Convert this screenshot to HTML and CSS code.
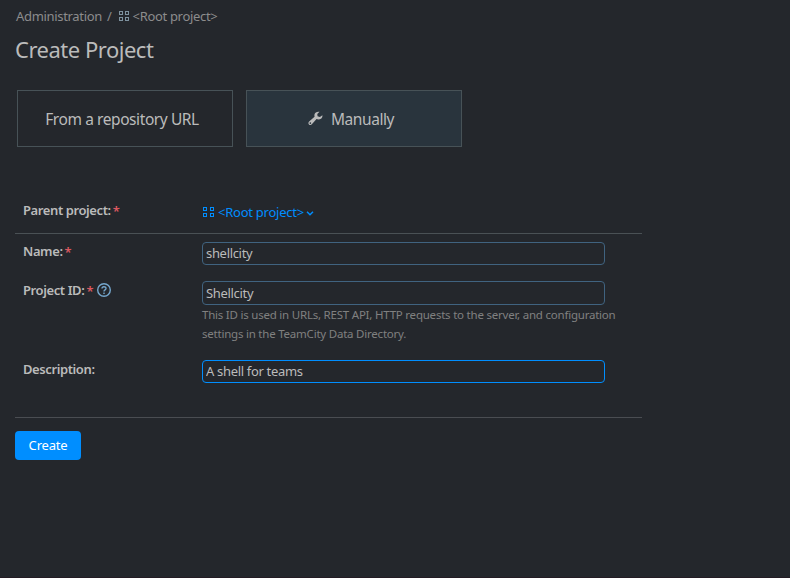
FILE: index.html
```html
<!DOCTYPE html>
<html lang="en">
<head>
<meta charset="utf-8">
<title>Create Project</title>
<link rel="stylesheet" href="styles.css">
</head>
<body>
<main class="page">
  <nav class="breadcrumbs">
    <span class="crumb">Administration</span><span class="slash">/</span>
    <svg class="grid-icon" viewBox="0 0 11 11"><path d="M.5.5h3v3h-3zM6.5.5h3v3h-3zM.5 6.500h3v3h-3zM6.5 6.500h3v3h-3z"/></svg>
    <span class="root">&lt;Root project&gt;</span>
  </nav>
  <h1 class="title">Create Project</h1>
  <div class="modes">
    <button class="mode">From a repository URL</button>
    <button class="mode selected">
      <svg class="wrench" viewBox="0 0 16 16"><path d="M15.3 4.5 12.7 6.3 10.2 5.5 9.9 3.1 12.3.9C10 .2 7.500 1.400 6.900 3.600 6.700 4.500 6.800 5.300 7 6.100L1.200 11.200C.3 12 .2 13.400 1 14.300 1.900 15.200 3.300 15.100 4.100 14.200L9.100 8.600C10.600 9.400 12.800 9.200 14.200 7.900 15.200 6.900 15.600 5.600 15.300 4.500ZM2.500 13.800a.9.9 0 1 1 0-1.800.9.9 0 0 1 0 1.800Z"/></svg>
      <span>Manually</span>
    </button>
  </div>
  <form class="form">
    <div class="row parent">
      <div class="label">Parent project: <span class="star">*</span></div>
      <a class="picker">
        <svg class="grid-icon" viewBox="0 0 11 11"><path d="M.5.5h3v3h-3zM7.500.5h3v3h-3zM.5 6.500h3v3h-3zM7.500 6.500h3v3h-3z"/></svg>
        <span class="picker-text">&lt;Root project&gt;</span>
        <svg class="chevron" viewBox="0 0 8 5"><path d="m1 .8 3 3 3-3"/></svg>
      </a>
    </div>
    <div class="row name">
      <label class="label" for="name">Name: <span class="star">*</span></label>
      <input class="field" id="name" value="shellcity">
    </div>
    <div class="row project-id">
      <label class="label" for="pid">Project ID: <span class="star">*</span><svg class="help" viewBox="0 0 14 14"><circle cx="7" cy="7" r="6.300"/><path d="M5 5.600C5 3.100 9 3.100 9 5.400 9 6.900 7 6.800 7 8.400M7 9.500v1.400"/></svg></label>
      <div class="control">
        <input class="field tall" id="pid" value="Shellcity">
        <p class="note">This ID is used in URLs, REST API, HTTP requests to the server, and configuration<br>settings in the TeamCity Data Directory.</p>
      </div>
    </div>
    <div class="row description">
      <label class="label" for="desc">Description:</label>
      <input class="field focused" id="desc" value="A shell for teams">
    </div>
    <button class="create" type="button">Create</button>
  </form>
</main>
</body>
</html>
```
FILE: styles.css
```css
* { box-sizing: border-box; }
body {
  margin: 0;
  background: #24272c;
  color: #bbb;
  font: 13px/18px "Noto Sans", sans-serif;
  letter-spacing: -.32px;
}
.page {
  height: 578px;
  padding: 7px 15px 0;
  border-bottom: 1px solid #241c24;
  overflow: hidden;
}
.breadcrumbs {
  display: flex;
  align-items: center;
  height: 18px;
  padding-left: 1px;
  color: #8c8c8c;
}
.slash { margin: 0 7px 0 5px; }
.grid-icon {
  flex: none;
  width: 11px;
  height: 11px;
  fill: none;
  stroke: #7e929f;
  shape-rendering: crispEdges;
}
.root { margin-left: 3px; }
.title {
  margin: 9px 0 0;
  font-size: 22px;
  line-height: 30px;
  font-weight: 400;
  letter-spacing: -.49px;
}
.modes {
  display: flex;
  gap: 13px;
  margin: 26px 0 0 2px;
}
.mode {
  display: flex;
  align-items: center;
  justify-content: center;
  gap: 8px;
  width: 216px;
  height: 57px;
  padding: 0 6px 0 0;
  border: 1px solid #475257;
  background: none;
  color: #bbb;
  font: 15.500px/20px "Noto Sans", sans-serif;
  letter-spacing: -.42px;
}
.mode.selected { background: #29343d; }
.wrench { width: 15px; height: 15px; fill: #bbb; }
.form { width: 627px; margin-top: 47px; }
.row {
  display: grid;
  grid-template-columns: 179px 403px;
  align-items: start;
  padding-left: 8px;
}
.parent { height: 40px; padding-top: 7px; border-bottom: 1px solid #4a5155; }
.name { height: 47px; padding-top: 8px; }
.project-id { height: 79px; }
.description { height: 58px; border-bottom: 1px solid #4a4d52; }
.label {
  display: flex;
  align-items: center;
  height: 18px;
  font-weight: 600;
  letter-spacing: -.4px;
}
.star { margin: 1px 0 0 2px; color: #db5860; }
.help { width: 14px; height: 14px; margin-left: 4px; fill: none; stroke: #75a7cd; stroke-width: 1.4; }
.picker {
  display: flex;
  align-items: center;
  height: 20px;
  margin-top: 1px;
  color: #008eff;
  letter-spacing: -.25px;
}
.picker .grid-icon { stroke: #008eff; margin-left: 1px; }
.picker-text { margin-left: 4px; }
.chevron { width: 8px; height: 5px; margin: 3px 0 0 2px; fill: none; stroke: #008eff; stroke-width: 1.500; }
.field {
  display: block;
  width: 403px;
  height: 23px;
  padding: 0 3px 1px;
  border: 1px solid #406380;
  border-radius: 4px;
  outline: none;
  background: transparent;
  color: #bbb;
  font: 13px/18px "Noto Sans", sans-serif;
  letter-spacing: -.32px;
}
.field.tall { height: 24px; padding-bottom: 0; }
.field.focused { border-color: #008eff; }
.note {
  margin: 0;
  color: #808080;
  font-size: 11.500px;
  line-height: 19px;
  letter-spacing: -.22px;
  white-space: nowrap;
}
.create {
  display: block;
  width: 66px;
  height: 29px;
  margin-top: 13px;
  padding: 0 0 1px;
  border: 0;
  border-radius: 4px;
  background: #008eff;
  color: #fff;
  font: 13px/18px "Noto Sans", sans-serif;
  letter-spacing: -.2px;
}
```
